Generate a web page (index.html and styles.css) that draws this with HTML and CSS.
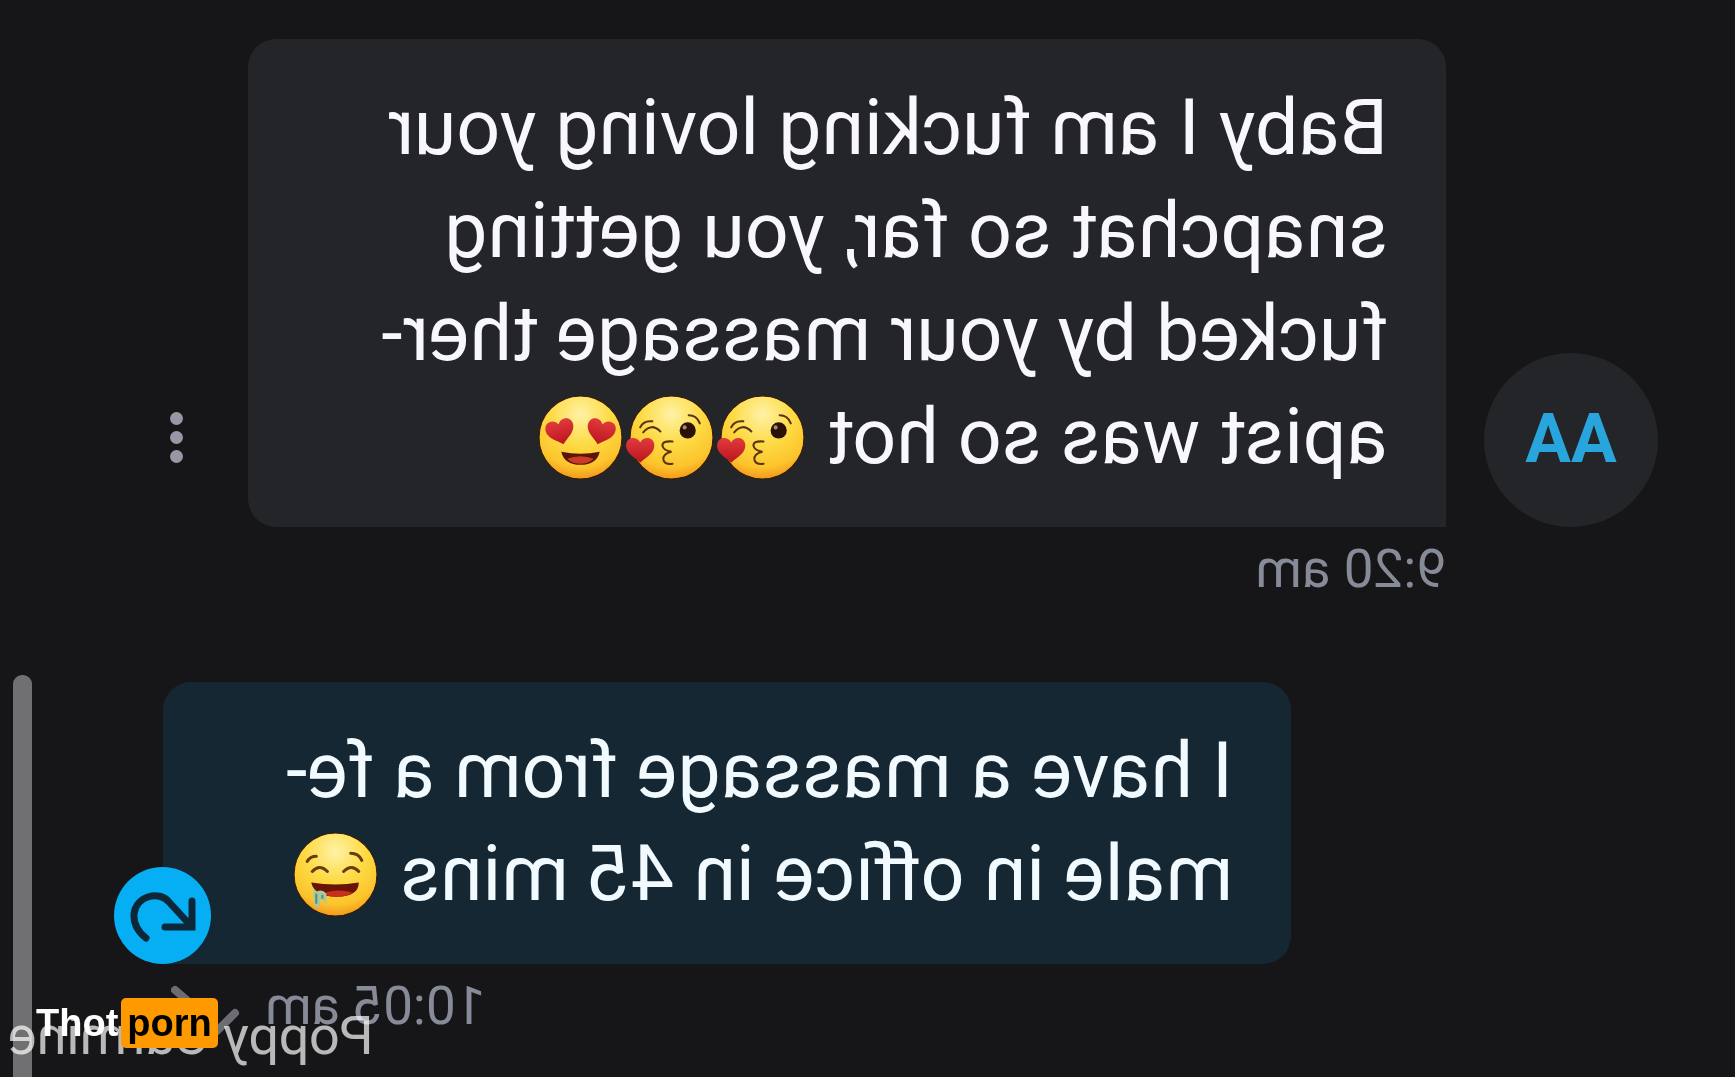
FILE: index.html
```html
<!DOCTYPE html>
<html lang="en">
<head>
  <meta charset="UTF-8">
  <meta name="viewport" content="width=device-width, initial-scale=1.0">
  <title>Messages</title>
  <link rel="stylesheet" href="styles.css">
</head>
<body>
  <!-- shared emoji parts -->
  <svg class="defs" aria-hidden="true">
    <defs>
      <radialGradient id="skin" cx="50%" cy="22%" r="80%">
        <stop offset="0" stop-color="#fff2a6"/>
        <stop offset="0.45" stop-color="#fddb45"/>
        <stop offset="0.8" stop-color="#fcc42c"/>
        <stop offset="1" stop-color="#f0931b"/>
      </radialGradient>
      <linearGradient id="red" x1="0" y1="0" x2="0" y2="1">
        <stop offset="0" stop-color="#e23a3c"/>
        <stop offset="1" stop-color="#b9151f"/>
      </linearGradient>
      <path id="heart" d="M0 13 C-5 8 -14 4 -14 -4 C-14 -13 -3 -14 0 -7 C3 -14 14 -13 14 -4 C14 4 5 8 0 13 Z" fill="url(#red)"/>
      <circle id="face" cx="45" cy="45" r="41" fill="url(#skin)" stroke="#3a1c05" stroke-width="1"/>
      <g id="kiss">
        <use href="#face"/>
        <g fill="none" stroke="#5a3410" stroke-width="2" stroke-linecap="round">
          <path d="M14 35 Q17 28 26 29"/>
          <path d="M17 40 Q25 30 34 39"/>
          <path d="M62 23 Q70 23 73 31"/>
          <path d="M46 49 Q36 48 36 53 Q37 58 45 59 Q36 61 37 67 Q38 72 46 71"/>
        </g>
        <circle cx="61" cy="38" r="8" fill="#2c1206"/>
        <circle cx="58" cy="35" r="2" fill="#a38a7a"/>
        <use href="#heart" x="14" y="57"/>
      </g>
    </defs>
  </svg>

  <main class="chat">
    <div class="row">
      <div class="avatar">AA</div>
      <div class="bubble">
        Baby I am fucking loving your<br>
        snapchat so far, you getting<br>
        fucked by your massage ther-<br>
        apist was so hot <svg class="emoji" viewBox="0 0 90 90"><use href="#kiss"/></svg><svg class="emoji" viewBox="0 0 90 90"><use href="#kiss"/></svg><svg class="emoji" viewBox="0 0 90 90">
          <use href="#face"/>
          <use href="#heart" transform="translate(25 39) rotate(-14)"/>
          <use href="#heart" transform="translate(65 39) rotate(14)"/>
          <path d="M26 59 Q45 63 64 59 Q61 72 45 72 Q29 72 26 59 Z" fill="#5b1408"/>
          <path d="M32 66 Q45 61 58 66 Q53 71 45 71 Q36 71 32 66 Z" fill="#c83c28"/>
        </svg>
      </div>
      <button class="menu" aria-label="More"><i></i><i></i><i></i></button>
    </div>
    <div class="time">9:20 am</div>

    <div class="row own">
      <div class="bubble">
        I have a massage from a fe-<br>
        male in office in 45 mins <svg class="emoji" viewBox="0 0 90 90">
          <use href="#face"/>
          <g fill="none" stroke="#6b3a12" stroke-width="3" stroke-linecap="round">
            <path d="M17 32 Q20 27 26 27"/>
            <path d="M60 24 Q68 24 71 31"/>
            <path d="M22 42 Q29 34 37 42"/>
            <path d="M53 42 Q61 34 68 42"/>
          </g>
          <path d="M21 53 Q45 57 68 53 Q68 67 46 67 Q24 67 21 53 Z" fill="#6a1408"/>
          <path d="M33 64 Q46 58 62 63 Q57 67 46 67 Q38 67 33 64 Z" fill="#c6301c"/>
          <path d="M23 58 L26 62 Q32 59 36 64 V73 Q34 75 33 70 H30 Q30 78 26 78 Q23 77 23 58 Z" fill="#a9c8a0"/>
          <path d="M26 64 V74 M32 65 V69" stroke="#4f9277" stroke-width="2"/>
        </svg>
        <button class="retry" aria-label="Retry">
          <svg viewBox="0 0 97 97">
            <path d="M65 71 Q78 61 77 47 C75 29 52 23 42 35 L19 60 M19 34 V60 H46"/>
          </svg>
        </button>
      </div>
    </div>
    <div class="time own">
      10:05 am
      <svg class="ticks" viewBox="0 0 76 62"><path d="M12 38 L30 56 M72 15 L38 44"/></svg>
    </div>

    <div class="scrollbar"></div>
    <div class="nick">Poppy Carmine</div>
  </main>

  <div class="brand">Thot<span>porn</span></div>
</body>
</html>
```

FILE: styles.css
```css
* {
  box-sizing: border-box;
}

body {
  margin: 0;
  background-color: #161618;
  font-family: Roboto, "Liberation Sans", sans-serif;
}

.defs {
  position: absolute;
  width: 0;
  height: 0;
}

/* the whole conversation is flipped */
.chat {
  position: relative;
  min-height: 100vh;
  padding-top: 39px;
  overflow: hidden;
  transform: scaleX(-1);
}

.row {
  display: flex;
  align-items: flex-end;
  padding: 0 170px 0 77px;
}

.avatar {
  width: 174px;
  height: 174px;
  margin-right: 38px;
  border-radius: 50%;
  background-color: #242528;
  color: #27a5dc;
  font-size: 68px;
  font-weight: 700;
  line-height: 172px;
  text-align: center;
}

.bubble {
  position: relative;
  flex: 1;
  padding: 38px 58px;
  border-radius: 28px 28px 28px 0;
  background-color: #242528;
  color: #f8f8fc;
  font-size: 77px;
  line-height: 103px;
  white-space: nowrap;
}

.emoji {
  width: 91px;
  height: 91px;
  vertical-align: -20px;
  overflow: visible;
  transform: scaleX(-1);
}

.menu {
  display: flex;
  flex-direction: column;
  gap: 6px;
  margin: 0 0 64px 65px;
  padding: 0;
  border: none;
  background: none;
  cursor: pointer;
}

.menu i {
  width: 13px;
  height: 13px;
  border-radius: 50%;
  background-color: #9698a5;
}

.time {
  margin-top: 11px;
  padding-left: 289px;
  color: #878b98;
  font-size: 53px;
  line-height: 62px;
}

.row.own {
  margin-top: 82px;
  padding: 0 163px 0 444px;
}

.own .bubble {
  border-radius: 28px 28px 0 28px;
  background-color: #152732;
  color: #f0faff;
}

.retry {
  position: absolute;
  right: -49px;
  bottom: 0;
  width: 97px;
  height: 97px;
  padding: 0;
  border: none;
  border-radius: 50%;
  background-color: #06aff4;
  cursor: pointer;
}

.retry svg {
  display: block;
  fill: none;
  stroke: #0c2737;
  stroke-width: 7;
  stroke-linecap: round;
}

.time.own {
  display: flex;
  justify-content: flex-end;
  gap: 18px;
  padding: 0 171px 0 0;
}

.ticks {
  width: 76px;
  height: 62px;
  fill: none;
  stroke: #6c6d73;
  stroke-width: 8;
  stroke-linecap: round;
}

.scrollbar {
  position: absolute;
  right: 13px;
  top: 675px;
  bottom: 0;
  width: 19px;
  border-radius: 9px 9px 0 0;
  background-color: #707072;
}

.nick {
  position: absolute;
  right: 8px;
  bottom: 10px;
  color: rgba(255, 255, 255, 0.7);
  font-size: 54px;
  font-weight: 400;
  line-height: 62px;
}

.brand {
  position: absolute;
  left: 36px;
  bottom: 29px;
  display: flex;
  gap: 3px;
  color: #fff;
  font-family: "Liberation Sans", Arial, sans-serif;
  font-size: 38px;
  font-weight: 700;
  line-height: 50px;
}

.brand span {
  padding: 0 6px;
  border-radius: 5px;
  background-color: #f90;
  color: #000;
}
```
